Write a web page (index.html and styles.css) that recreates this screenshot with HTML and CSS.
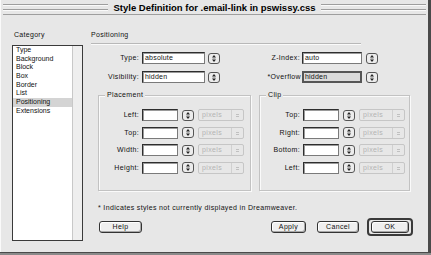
FILE: index.html
```html
<!DOCTYPE html>
<html lang="en">
<head>
    <meta charset="UTF-8">
    <title>Style Definition for .email-link in pswissy.css</title>
    <link rel="stylesheet" href="styles.css">
</head>
<body>
<div class="window">
    <div class="titlebar"><span class="title">Style Definition for .email-link in pswissy.css</span></div>
    <div class="dialog">
        <div class="sidebar">
            <div class="heading">Category</div>
            <div class="listbox">
                <ul class="categories">
                    <li>Type</li>
                    <li>Background</li>
                    <li>Block</li>
                    <li>Box</li>
                    <li>Border</li>
                    <li>List</li>
                    <li class="selected">Positioning</li>
                    <li>Extensions</li>
                </ul>
                <div class="scrollbar"></div>
            </div>
        </div>

        <div class="panel">
            <div class="heading rule">Positioning</div>

            <div class="field-row first">
                <span class="lbl lbl-main">Type:</span>
                <div class="input wide">absolute</div>
                <svg class="stepper" width="12" height="11" viewBox="0 0 12 11"><rect x="0.5" y="0.5" width="11" height="10" rx="2.5" fill="#ececec" stroke="#555"/><path d="M4 4.4h4L6 2z M4 6.6h4L6 9z" fill="#222"/><path d="M4.5 5.5h3" stroke="#888" stroke-width="0.6"/></svg>
                <span class="lbl lbl-side">Z-Index:</span>
                <div class="input mid">auto</div>
                <svg class="stepper far" width="12" height="11" viewBox="0 0 12 11"><rect x="0.5" y="0.5" width="11" height="10" rx="2.5" fill="#ececec" stroke="#555"/><path d="M4 4.4h4L6 2z M4 6.6h4L6 9z" fill="#222"/><path d="M4.5 5.5h3" stroke="#888" stroke-width="0.6"/></svg>
            </div>
            <div class="field-row">
                <span class="lbl lbl-main">Visibility:</span>
                <div class="input wide">hidden</div>
                <svg class="stepper" width="12" height="11" viewBox="0 0 12 11"><rect x="0.5" y="0.5" width="11" height="10" rx="2.5" fill="#ececec" stroke="#555"/><path d="M4 4.4h4L6 2z M4 6.6h4L6 9z" fill="#222"/><path d="M4.5 5.5h3" stroke="#888" stroke-width="0.6"/></svg>
                <span class="lbl lbl-side flush">*Overflow</span>
                <div class="input mid focused">hidden</div>
                <svg class="stepper far" width="12" height="11" viewBox="0 0 12 11"><rect x="0.5" y="0.5" width="11" height="10" rx="2.5" fill="#ececec" stroke="#555"/><path d="M4 4.4h4L6 2z M4 6.6h4L6 9z" fill="#222"/><path d="M4.5 5.5h3" stroke="#888" stroke-width="0.6"/></svg>
            </div>

            <div class="groups">
                <div class="group placement">
                    <span class="legend">Placement</span>
                    <div class="group-row">
                        <span class="lbl lbl-group">Left:</span>
                        <div class="input short"></div>
                        <svg class="stepper" width="12" height="11" viewBox="0 0 12 11"><rect x="0.5" y="0.5" width="11" height="10" rx="2.5" fill="#ececec" stroke="#555"/><path d="M4 4.4h4L6 2z M4 6.6h4L6 9z" fill="#222"/><path d="M4.5 5.5h3" stroke="#888" stroke-width="0.6"/></svg>
                        <div class="units">pixels<span class="units-arrows"></span></div>
                    </div>
                    <div class="group-row">
                        <span class="lbl lbl-group">Top:</span>
                        <div class="input short"></div>
                        <svg class="stepper" width="12" height="11" viewBox="0 0 12 11"><rect x="0.5" y="0.5" width="11" height="10" rx="2.5" fill="#ececec" stroke="#555"/><path d="M4 4.4h4L6 2z M4 6.6h4L6 9z" fill="#222"/><path d="M4.5 5.5h3" stroke="#888" stroke-width="0.6"/></svg>
                        <div class="units">pixels<span class="units-arrows"></span></div>
                    </div>
                    <div class="group-row">
                        <span class="lbl lbl-group">Width:</span>
                        <div class="input short"></div>
                        <svg class="stepper" width="12" height="11" viewBox="0 0 12 11"><rect x="0.5" y="0.5" width="11" height="10" rx="2.5" fill="#ececec" stroke="#555"/><path d="M4 4.4h4L6 2z M4 6.6h4L6 9z" fill="#222"/><path d="M4.5 5.5h3" stroke="#888" stroke-width="0.6"/></svg>
                        <div class="units">pixels<span class="units-arrows"></span></div>
                    </div>
                    <div class="group-row">
                        <span class="lbl lbl-group">Height:</span>
                        <div class="input short"></div>
                        <svg class="stepper" width="12" height="11" viewBox="0 0 12 11"><rect x="0.5" y="0.5" width="11" height="10" rx="2.5" fill="#ececec" stroke="#555"/><path d="M4 4.4h4L6 2z M4 6.6h4L6 9z" fill="#222"/><path d="M4.5 5.5h3" stroke="#888" stroke-width="0.6"/></svg>
                        <div class="units">pixels<span class="units-arrows"></span></div>
                    </div>
                </div>

                <div class="group clip">
                    <span class="legend">Clip</span>
                    <div class="group-row">
                        <span class="lbl lbl-group">Top:</span>
                        <div class="input short"></div>
                        <svg class="stepper" width="12" height="11" viewBox="0 0 12 11"><rect x="0.5" y="0.5" width="11" height="10" rx="2.5" fill="#ececec" stroke="#555"/><path d="M4 4.4h4L6 2z M4 6.6h4L6 9z" fill="#222"/><path d="M4.5 5.5h3" stroke="#888" stroke-width="0.6"/></svg>
                        <div class="units">pixels<span class="units-arrows"></span></div>
                    </div>
                    <div class="group-row">
                        <span class="lbl lbl-group">Right:</span>
                        <div class="input short"></div>
                        <svg class="stepper" width="12" height="11" viewBox="0 0 12 11"><rect x="0.5" y="0.5" width="11" height="10" rx="2.5" fill="#ececec" stroke="#555"/><path d="M4 4.4h4L6 2z M4 6.6h4L6 9z" fill="#222"/><path d="M4.5 5.5h3" stroke="#888" stroke-width="0.6"/></svg>
                        <div class="units">pixels<span class="units-arrows"></span></div>
                    </div>
                    <div class="group-row">
                        <span class="lbl lbl-group">Bottom:</span>
                        <div class="input short"></div>
                        <svg class="stepper" width="12" height="11" viewBox="0 0 12 11"><rect x="0.5" y="0.5" width="11" height="10" rx="2.5" fill="#ececec" stroke="#555"/><path d="M4 4.4h4L6 2z M4 6.6h4L6 9z" fill="#222"/><path d="M4.5 5.5h3" stroke="#888" stroke-width="0.6"/></svg>
                        <div class="units">pixels<span class="units-arrows"></span></div>
                    </div>
                    <div class="group-row">
                        <span class="lbl lbl-group">Left:</span>
                        <div class="input short"></div>
                        <svg class="stepper" width="12" height="11" viewBox="0 0 12 11"><rect x="0.5" y="0.5" width="11" height="10" rx="2.5" fill="#ececec" stroke="#555"/><path d="M4 4.4h4L6 2z M4 6.6h4L6 9z" fill="#222"/><path d="M4.5 5.5h3" stroke="#888" stroke-width="0.6"/></svg>
                        <div class="units">pixels<span class="units-arrows"></span></div>
                    </div>
                </div>
            </div>

            <p class="note">* Indicates styles not currently displayed in Dreamweaver.</p>

            <div class="buttons">
                <button class="btn help">Help</button>
                <button class="btn apply">Apply</button>
                <button class="btn cancel">Cancel</button>
                <div class="default-ring"><button class="btn ok">OK</button></div>
            </div>
        </div>
    </div>
</div>
</body>
</html>
```

FILE: styles.css
```css
body {
    margin: 0;
    background-color: #8a8a8a;
    font-family: "Liberation Sans", Arial, sans-serif;
    font-size: 7px;
    color: #111;
}
.window {
    width: 428px;
    height: 252px;
    background-color: #e7e7e7;
    border-right: 3px solid #4a4a4a;
    border-bottom: 1px solid #4a4a4a;
    box-shadow: inset 1px 0 0 #fafafa;
}
.titlebar {
    height: 16px;
    margin: 0 2px 0 3px;
    display: flex;
    align-items: center;
    justify-content: center;
    background: repeating-linear-gradient(to bottom, transparent 0, transparent 3px, #9e9e9e 3px, #9e9e9e 4px, #fafafa 4px, #fafafa 5px);
    background-size: 100% 14px;
    background-repeat: no-repeat;
    background-position: 0 1px;
}
.title {
    background-color: #e7e7e7;
    padding: 0 5px;
    font-weight: bold;
    font-size: 9.5px;
    line-height: 12px;
    color: #000;
}
.dialog {
    display: flex;
    padding: 14px 0 0 12px;
}
.heading {
    line-height: 10px;
    height: 10px;
    padding-left: 2px;
    letter-spacing: 0.3px;
}
.sidebar {
    width: 71px;
    margin-right: 8px;
}
.listbox {
    margin-top: 5px;
    height: 196px;
    box-sizing: border-box;
    border: 1px solid #3a3a3a;
    background: #fff;
    display: flex;
}
.categories {
    list-style: none;
    margin: 0;
    padding: 0;
    flex: 1;
}
.categories li {
    height: 8.67px;
    line-height: 8.67px;
    padding-left: 3px;
}
.categories li.selected {
    background-color: #d4d4d4;
}
.scrollbar {
    width: 9px;
    background-color: #eeeeee;
    border-left: 1px solid #c8c8c8;
}
.panel {
    width: 329px;
    letter-spacing: 0.35px;
}
.rule {
    width: 270px;
    padding-left: 0;
    padding-bottom: 3px;
    border-bottom: 1px solid #b8b8b8;
    box-shadow: 0 1px 0 #fafafa;
}
.field-row {
    display: flex;
    align-items: center;
    height: 12px;
    margin-top: 7px;
}
.field-row.first {
    margin-top: 8px;
}
.lbl {
    text-align: right;
    line-height: 12px;
    white-space: nowrap;
}
.lbl-main {
    width: 48px;
    margin-right: 3px;
}
.lbl-side {
    width: 77px;
    margin-left: 3px;
    margin-right: 2px;
}
.lbl-side.flush {
    margin-right: 1px;
    width: 78px;
}
.input {
    height: 12px;
    box-sizing: border-box;
    border: 1px solid #2e2e2e;
    border-bottom-color: #7a7a7a;
    border-right-color: #7a7a7a;
    background-color: #fff;
    box-shadow: inset 1px 1px 0 #9a9a9a;
    line-height: 10px;
    padding-left: 2px;
    letter-spacing: 0.2px;
}
.input.wide {
    width: 63px;
}
.input.mid {
    width: 60px;
}
.input.short {
    width: 36px;
}
.input.focused {
    background-color: #dadada;
    border: 2px solid #555;
    line-height: 8px;
    padding-left: 1px;
    box-shadow: none;
    height: 12px;
}
.stepper {
    display: block;
    margin-left: 3px;
    flex: none;
}
.stepper.far {
    margin-left: 4px;
}
.groups {
    display: flex;
    margin: 12px 0 0 7px;
}
.group {
    position: relative;
    height: 96px;
    box-sizing: border-box;
    border: 1px solid #c2c2c2;
    box-shadow: 1px 1px 0 #fafafa, inset 1px 1px 0 #fafafa;
    padding-top: 13px;
    display: flex;
    flex-direction: column;
    gap: 5.5px;
}
.placement {
    width: 153px;
    margin-right: 8px;
}
.clip {
    width: 151px;
}
.legend {
    position: absolute;
    top: -6px;
    left: 6px;
    padding: 0 2px;
    background-color: #e7e7e7;
    line-height: 10px;
}
.group-row {
    display: flex;
    align-items: center;
    height: 12px;
}
.lbl-group {
    width: 40px;
    margin-right: 3px;
}
.group-row .stepper {
    margin-left: 4px;
}
.units {
    position: relative;
    width: 46px;
    height: 12px;
    box-sizing: border-box;
    margin-left: 4px;
    border: 1px solid #c6c6c6;
    border-radius: 2px;
    color: #b4b4b4;
    line-height: 10px;
    padding-left: 3px;
}
.units-arrows {
    position: absolute;
    right: 0;
    top: 0;
    bottom: 0;
    width: 11px;
    border-left: 1px solid #d0d0d0;
    background: linear-gradient(to bottom, transparent 4px, #c0c0c0 4px, #c0c0c0 5px, transparent 5px, transparent 6px, #c0c0c0 6px, #c0c0c0 7px, transparent 7px) no-repeat center / 3px 100%;
}
.note {
    margin: 12px 0 0 7px;
    line-height: 10px;
}
.buttons {
    display: flex;
    align-items: center;
    height: 18px;
    margin-top: 5px;
    padding-left: 8px;
}
.btn {
    height: 12px;
    box-sizing: border-box;
    padding: 0;
    border: 1px solid #333;
    border-radius: 3px;
    background-color: #efefef;
    box-shadow: inset -1px -1px 0 #a8a8a8, inset 1px 1px 0 #fff;
    font-family: "Liberation Sans", Arial, sans-serif;
    font-size: 7px;
    line-height: 10px;
    letter-spacing: 0.35px;
    color: #111;
}
.help {
    width: 43px;
}
.apply {
    width: 35px;
    margin-left: auto;
}
.cancel {
    width: 42px;
    margin-left: 11px;
}
.default-ring {
    width: 46px;
    height: 18px;
    box-sizing: border-box;
    margin-left: 8px;
    margin-right: 7px;
    border: 2px solid #3a3a3a;
    border-radius: 4px;
    display: flex;
    align-items: center;
    justify-content: center;
}
.ok {
    width: 38px;
}
```
